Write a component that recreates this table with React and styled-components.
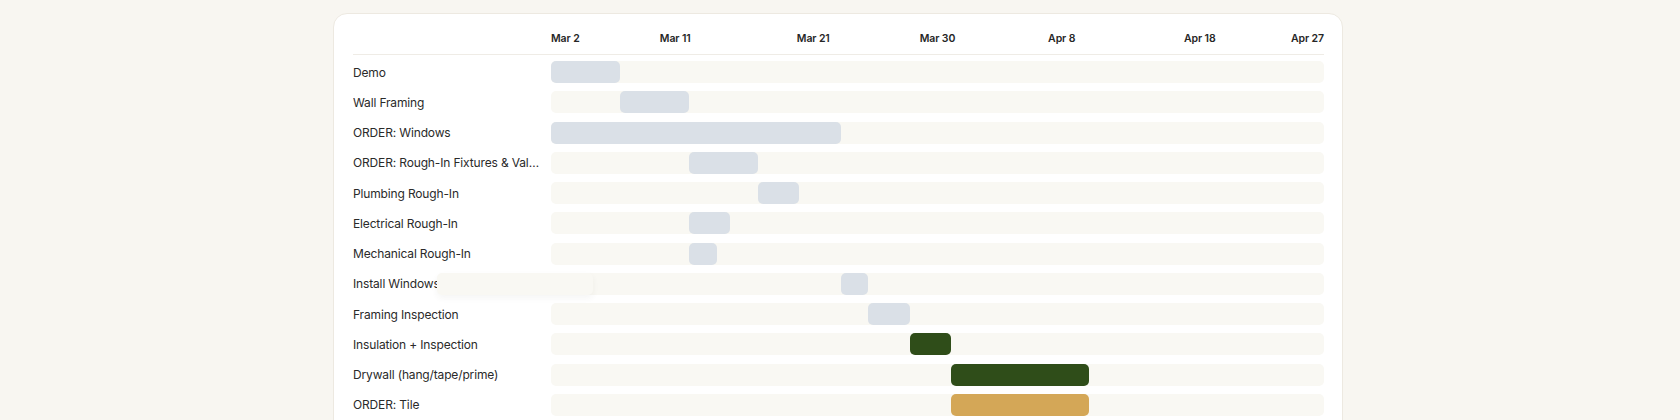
import React from 'react'
import styled, { createGlobalStyle } from 'styled-components'

const GlobalStyle = createGlobalStyle`
  html, body {
    margin: 0;
    padding: 0;
    background: #f8f6f1;
    font-family: Inter, "Noto Sans", "Liberation Sans", sans-serif;
    -webkit-font-smoothing: antialiased;
  }
`

const TOTAL_DAYS = 56

const ticks = [
  { label: 'Mar 2', day: 0, align: 'start' },
  { label: 'Mar 11', day: 9 },
  { label: 'Mar 21', day: 19 },
  { label: 'Mar 30', day: 28 },
  { label: 'Apr 8', day: 37 },
  { label: 'Apr 18', day: 47 },
  { label: 'Apr 27', day: 56, align: 'end' },
]

const tasks = [
  { name: 'Demo', start: 0, end: 5, tone: 'gray' },
  { name: 'Wall Framing', start: 5, end: 10, tone: 'gray' },
  { name: 'ORDER: Windows', start: 0, end: 21, tone: 'gray' },
  { name: 'ORDER: Rough-In Fixtures & Valves', start: 10, end: 15, tone: 'gray' },
  { name: 'Plumbing Rough-In', start: 15, end: 18, tone: 'gray' },
  { name: 'Electrical Rough-In', start: 10, end: 13, tone: 'gray' },
  { name: 'Mechanical Rough-In', start: 10, end: 12, tone: 'gray' },
  { name: 'Install Windows', start: 21, end: 23, tone: 'gray', ghost: true },
  { name: 'Framing Inspection', start: 23, end: 26, tone: 'gray' },
  { name: 'Insulation + Inspection', start: 26, end: 29, tone: 'green' },
  { name: 'Drywall (hang/tape/prime)', start: 29, end: 39, tone: 'green' },
  { name: 'ORDER: Tile', start: 29, end: 39, tone: 'gold' },
]

const tones = {
  gray: '#dae0e7',
  green: '#2f4d19',
  gold: '#d4a757',
}

const Page = styled.div`
  display: flex;
  justify-content: center;
  padding: 13px 4px 0 0;
`

const Card = styled.div`
  width: 1010px;
  box-sizing: border-box;
  background: #ffffff;
  border: 1px solid #ede9e1;
  border-radius: 14px;
  padding: 17px 18px 24px 19px;
`

const Header = styled.div`
  display: grid;
  grid-template-columns: 198px 1fr;
  height: 23px;
  border-bottom: 1px solid #efece6;
`

const Axis = styled.div`
  position: relative;
`

const Tick = styled.span`
  position: absolute;
  top: 1px;
  font-size: 10.5px;
  line-height: 14px;
  font-weight: 600;
  letter-spacing: -0.1px;
  color: #262626;
  white-space: nowrap;
  transform: ${(p) =>
    p.$align === 'start' ? 'none' : p.$align === 'end' ? 'translateX(-100%)' : 'translateX(-50%)'};
`

const Rows = styled.div`
  display: flex;
  flex-direction: column;
  gap: 8.27px;
  margin-top: 6px;
`

const Row = styled.div`
  display: grid;
  grid-template-columns: 198px 1fr;
  align-items: center;
  height: 22px;
`

const Label = styled.span`
  font-size: 12px;
  letter-spacing: -0.15px;
  color: #2a2a2a;
  white-space: nowrap;
  overflow: hidden;
  text-overflow: ellipsis;
  padding-right: 10px;
`

const Track = styled.div`
  position: relative;
  height: 22px;
  background: #f9f8f3;
  border-radius: 5px;
`

const Bar = styled.div`
  position: absolute;
  top: 0;
  bottom: 0;
  background: ${(p) => tones[p.$tone]};
  border-radius: 5px;
`

const Ghost = styled.div`
  position: absolute;
  top: 0;
  left: -114px;
  width: 156px;
  height: 22px;
  background: #f9f8f3;
  border-radius: 5px;
  box-shadow: 0 3px 6px rgba(60, 50, 30, 0.05);
`

const pct = (day) => `${(day / TOTAL_DAYS) * 100}%`

export default function App() {
  return (
    <>
      <GlobalStyle />
      <Page>
        <Card>
          <Header>
            <div />
            <Axis>
              {ticks.map((t) => (
                <Tick key={t.label} $align={t.align} style={{ left: pct(t.day) }}>
                  {t.label}
                </Tick>
              ))}
            </Axis>
          </Header>
          <Rows>
            {tasks.map((task) => (
              <Row key={task.name}>
                <Label>{task.name}</Label>
                <Track>
                  {task.ghost && <Ghost />}
                  <Bar
                    $tone={task.tone}
                    style={{ left: pct(task.start), width: pct(task.end - task.start) }}
                  />
                </Track>
              </Row>
            ))}
          </Rows>
        </Card>
      </Page>
    </>
  )
}
